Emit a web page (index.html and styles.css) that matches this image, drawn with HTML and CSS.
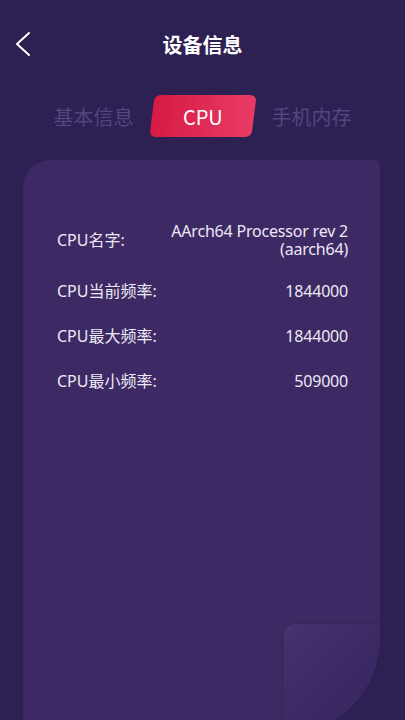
FILE: index.html
```html
<!DOCTYPE html>
<html lang="zh-CN">
<head>
<meta charset="UTF-8">
<meta name="viewport" content="width=device-width, initial-scale=1.0">
<title>设备信息</title>
<link rel="stylesheet" href="styles.css">
</head>
<body>
    <div class="header">
        <div class="back">
            <svg width="16" height="26" viewBox="0 0 16 26">
                <polyline points="14,2 2,13 14,24" fill="none" stroke="#ffffff" stroke-width="2" stroke-linecap="round" stroke-linejoin="round"/>
            </svg>
        </div>
        <div class="title">设备信息</div>
        <div></div>
    </div>
    <div class="tabs">
        <div class="tab">基本信息</div>
        <div class="tab active"><span>CPU</span></div>
        <div class="tab">手机内存</div>
    </div>
    <div class="card">
        <div class="row">
            <div class="label">CPU名字:</div>
            <div class="value">AArch64 Processor rev 2 (aarch64)</div>
        </div>
        <div class="row">
            <div class="label">CPU当前频率:</div>
            <div class="value">1844000</div>
        </div>
        <div class="row">
            <div class="label">CPU最大频率:</div>
            <div class="value">1844000</div>
        </div>
        <div class="row">
            <div class="label">CPU最小频率:</div>
            <div class="value">509000</div>
        </div>
        <div class="curl"></div>
    </div>
</body>
</html>
```

FILE: styles.css
```css
body {
    margin: 0;
    padding: 0;
    height: 720px;
    overflow: hidden;
    background-color: #2d2053;
    font-family: "Noto Sans", "Noto Sans CJK SC", sans-serif;
    color: #ece8f4;
}
.header {
    height: 88px;
    display: grid;
    grid-template-columns: 1fr auto 1fr;
    align-items: center;
}
.back {
    padding-left: 15px;
    display: flex;
    align-items: center;
}
.title {
    font-size: 20px;
    font-weight: bold;
    color: #ffffff;
    font-family: "Noto Sans CJK SC", sans-serif;
}
.tabs {
    display: flex;
    justify-content: center;
    align-items: center;
    gap: 18px;
    margin-top: 7px;
}
.tab {
    font-size: 20px;
    color: #54457e;
    font-family: "Noto Sans CJK SC", sans-serif;
}
.tab.active {
    width: 102px;
    height: 42px;
    border-radius: 6px;
    transform: skewX(-7deg);
    background: linear-gradient(90deg, #d61a44, #e83c64);
    display: flex;
    align-items: center;
    justify-content: center;
    color: #ffffff;
}
.tab.active span {
    transform: skewX(7deg);
}
.card {
    position: relative;
    box-sizing: border-box;
    width: 357px;
    min-height: 574px;
    margin: 23px 0 0 23px;
    padding: 62px 32px 0 34px;
    background-color: #3d2a64;
    border-radius: 28px 5px 96px 0;
    display: flex;
    flex-direction: column;
    gap: 21px;
}
.row {
    display: flex;
    justify-content: space-between;
    align-items: center;
    min-height: 24px;
    font-size: 16px;
    line-height: 18px;
}
.value {
    max-width: 186px;
    text-align: right;
    letter-spacing: -0.2px;
}
.curl {
    position: absolute;
    right: 0;
    bottom: 0;
    width: 96px;
    height: 110px;
    border-radius: 10px 0 96px 0;
    background: linear-gradient(135deg, #46336e, #3a2862 60%);
    box-shadow: -1px -1px 3px rgba(0, 0, 0, 0.1);
}
```
